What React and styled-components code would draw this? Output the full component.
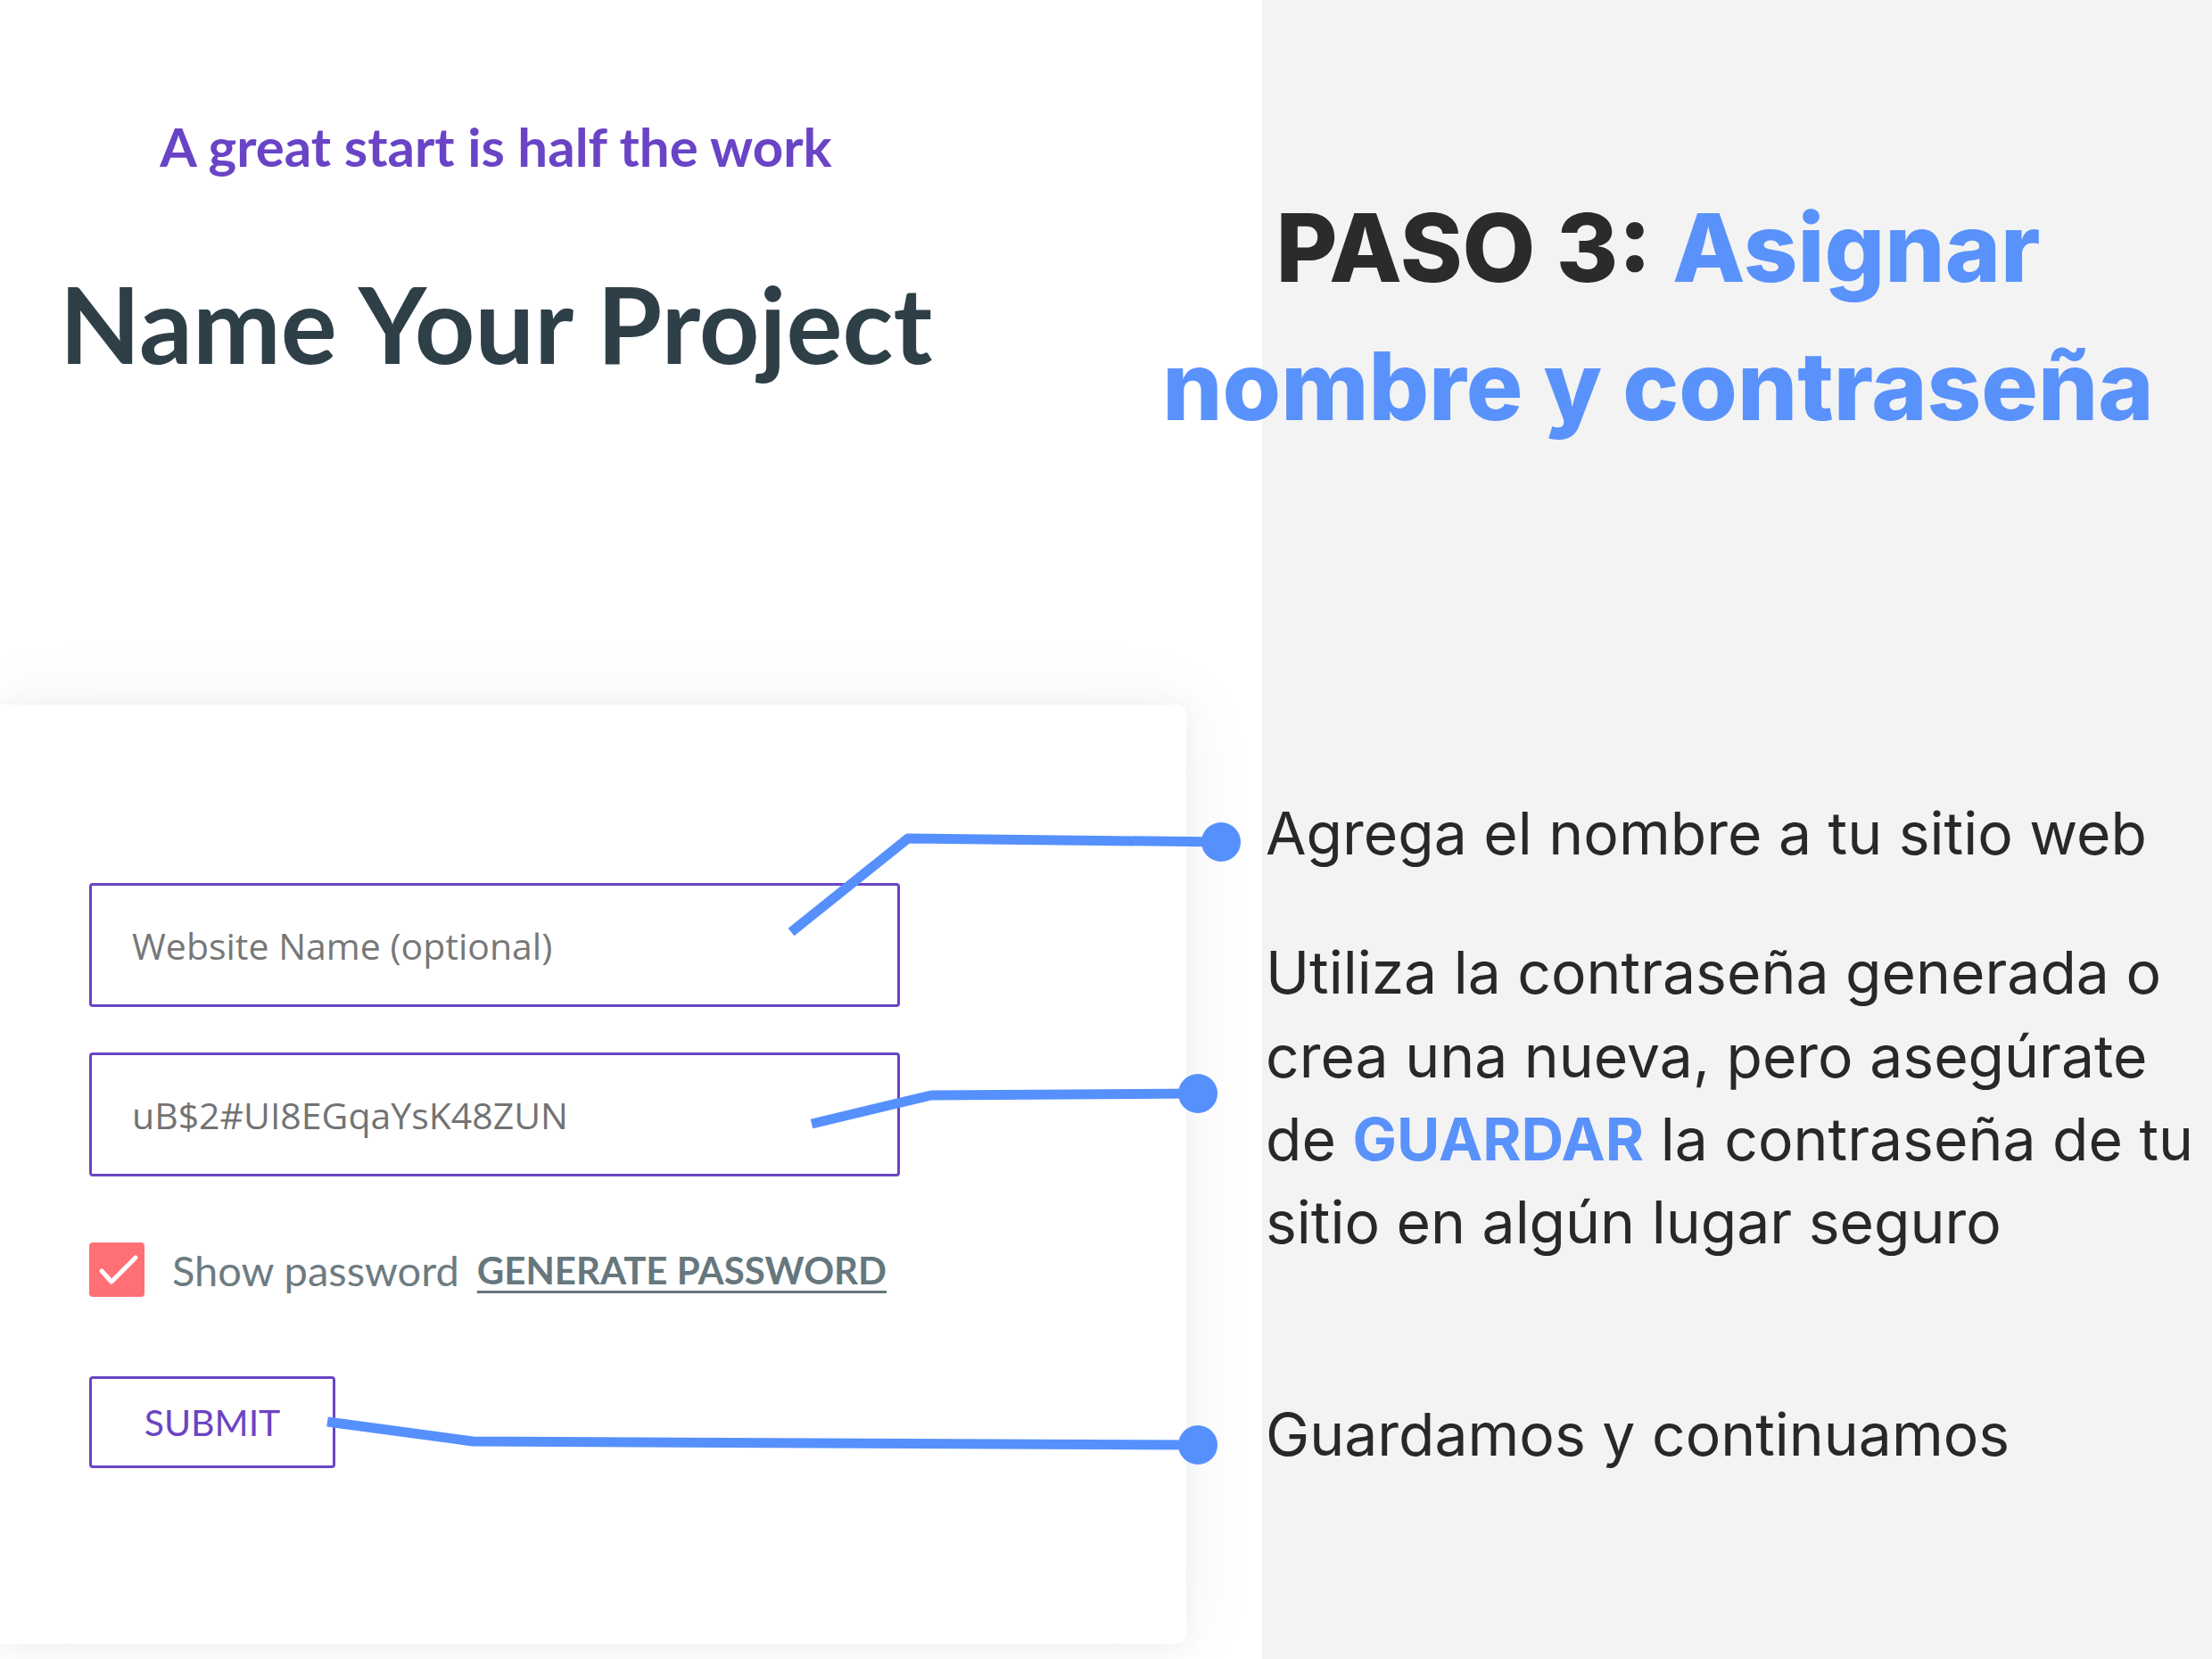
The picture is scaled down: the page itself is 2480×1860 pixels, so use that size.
import React from "react";
import styled, { createGlobalStyle } from "styled-components";

const GlobalStyle = createGlobalStyle`
  html, body {
    margin: 0;
    padding: 0;
    background: #f3f3f3;
  }
  * { box-sizing: border-box; }
`;

const Page = styled.div`
  position: relative;
  width: 2480px;
  height: 1860px;
  display: grid;
  grid-template-columns: 1415px 1fr;
  background: #f3f3f3;
  overflow: hidden;
`;

const LeftColumn = styled.div`
  display: flex;
  flex-direction: column;
  background: #ffffff;
`;

const Intro = styled.header`
  height: 790px;
  width: 1112px;
  padding-top: 128px;
  display: flex;
  flex-direction: column;
  align-items: center;
  gap: 92px;
  text-align: center;
`;

const Tagline = styled.p`
  margin: 0;
  font-family: "Lato", "Open Sans", sans-serif;
  font-weight: 700;
  font-size: 60px;
  line-height: 1.2;
  color: #6944c6;
  white-space: nowrap;
`;

const Title = styled.h1`
  margin: 0;
  font-family: "Lato", "Open Sans", sans-serif;
  font-weight: 700;
  font-size: 118px;
  line-height: 1.2;
  color: #2e3f48;
  white-space: nowrap;
`;

const Card = styled.section`
  flex: 1;
  margin: 0 85px 17px 0;
  background: #ffffff;
  border-radius: 0 10px 10px 0;
  box-shadow: 0 0 24px rgba(40, 50, 90, 0.05), 0 0 90px rgba(40, 50, 90, 0.06);
  padding: 200px 0 0 100px;
`;

const Form = styled.form`
  display: flex;
  flex-direction: column;
  align-items: flex-start;
  width: 909px;
`;

const Field = styled.input`
  display: block;
  width: 909px;
  height: 139px;
  margin: 0 0 ${(p) => p.$gap}px 0;
  padding: 0 45px;
  border: 3px solid #6a44c4;
  border-radius: 4px;
  background: #ffffff;
  font-family: "Open Sans", "Noto Sans", sans-serif;
  font-size: 41px;
  color: #737373;
  outline: none;
  &::placeholder {
    color: #777777;
    opacity: 1;
  }
`;

const CheckRow = styled.div`
  display: flex;
  align-items: center;
  height: 61px;
  margin-bottom: 89px;
`;

const CheckBox = styled.span`
  width: 62px;
  height: 61px;
  border-radius: 4px;
  background: #ff7075;
  display: flex;
  align-items: center;
  justify-content: center;
  margin-right: 31px;
  flex: none;
`;

const CheckLabel = styled.span`
  font-family: "Lato", "Open Sans", sans-serif;
  font-size: 47px;
  color: #6d7c81;
  margin-right: 20px;
  white-space: nowrap;
`;

const GenerateLink = styled.a`
  font-family: "Lato", "Open Sans", sans-serif;
  font-size: 42px;
  font-weight: 700;
  color: #66777d;
  text-decoration: underline;
  text-decoration-thickness: 3px;
  text-underline-offset: 7px;
  white-space: nowrap;
  cursor: pointer;
`;

const SubmitButton = styled.button`
  width: 276px;
  height: 103px;
  border: 3px solid #6a44c4;
  border-radius: 4px;
  background: #ffffff;
  color: #6a44c4;
  font-family: "Lato", "Open Sans", sans-serif;
  font-size: 41px;
  padding: 0;
  cursor: pointer;
`;

const RightColumn = styled.div`
  display: flex;
  flex-direction: column;
  padding-top: 200px;
`;

const StepHeading = styled.h2`
  margin: 0 0 0 -176px;
  width: 1240px;
  text-align: center;
  font-family: "Inter", "Open Sans", sans-serif;
  font-weight: 800;
  font-size: 106px;
  line-height: 155px;
  color: #2b2b2b;
  white-space: nowrap;
`;

const Accent = styled.span`
  color: #5a92fc;
`;

const Notes = styled.div`
  margin-top: 378px;
  padding-left: 4px;
  display: flex;
  flex-direction: column;
`;

const Note = styled.p`
  margin: 0 0 ${(p) => p.$gap || 0}px 0;
  font-family: "Inter", "Open Sans", sans-serif;
  font-size: 66px;
  line-height: 93.3px;
  color: #282828;
  white-space: nowrap;
`;

const Strong = styled.strong`
  color: #5a92fc;
  font-weight: 700;
`;

const Overlay = styled.svg`
  position: absolute;
  inset: 0;
  width: 2480px;
  height: 1860px;
  pointer-events: none;
`;

function Connectors() {
  const blue = "#5690fd";
  return (
    <Overlay viewBox="0 0 2480 1860">
      <g fill="none" stroke={blue} strokeWidth="11" strokeLinejoin="round">
        <polyline points="887,1045 1018,940 1369,944" />
        <polyline points="910,1260 1044,1228 1344,1226" />
        <polyline points="367,1594 530,1616 1343,1620" />
      </g>
      <g fill={blue}>
        <circle cx="1369" cy="944" r="22" />
        <circle cx="1343" cy="1226" r="22" />
        <circle cx="1343" cy="1620" r="22" />
      </g>
    </Overlay>
  );
}

export default function App() {
  return (
    <>
      <GlobalStyle />
      <Page>
        <LeftColumn>
          <Intro>
            <Tagline>A great start is half the work</Tagline>
            <Title>Name Your Project</Title>
          </Intro>
          <Card>
            <Form onSubmit={(e) => e.preventDefault()}>
              <Field $gap={51} placeholder="Website Name (optional)" />
              <Field $gap={74} defaultValue="uB$2#UI8EGqaYsK48ZUN" />
              <CheckRow>
                <CheckBox>
                  <svg width="62" height="61" viewBox="0 0 62 61">
                    <polyline
                      points="14,32 25,44 52,17"
                      fill="none"
                      stroke="#ffffff"
                      strokeWidth="5"
                      strokeLinecap="round"
                      strokeLinejoin="round"
                    />
                  </svg>
                </CheckBox>
                <CheckLabel>Show password</CheckLabel>
                <GenerateLink>GENERATE PASSWORD</GenerateLink>
              </CheckRow>
              <SubmitButton type="submit">SUBMIT</SubmitButton>
            </Form>
          </Card>
        </LeftColumn>
        <RightColumn>
          <StepHeading>
            PASO 3: <Accent>Asignar</Accent>
            <br />
            <Accent>nombre y contraseña</Accent>
          </StepHeading>
          <Notes>
            <Note $gap={63}>Agrega el nombre a tu sitio web</Note>
            <Note $gap={145}>
              Utiliza la contraseña generada o
              <br />
              crea una nueva, pero asegúrate
              <br />
              de <Strong>GUARDAR</Strong> la contraseña de tu
              <br />
              sitio en algún lugar seguro
            </Note>
            <Note>Guardamos y continuamos</Note>
          </Notes>
        </RightColumn>
        <Connectors />
      </Page>
    </>
  );
}
